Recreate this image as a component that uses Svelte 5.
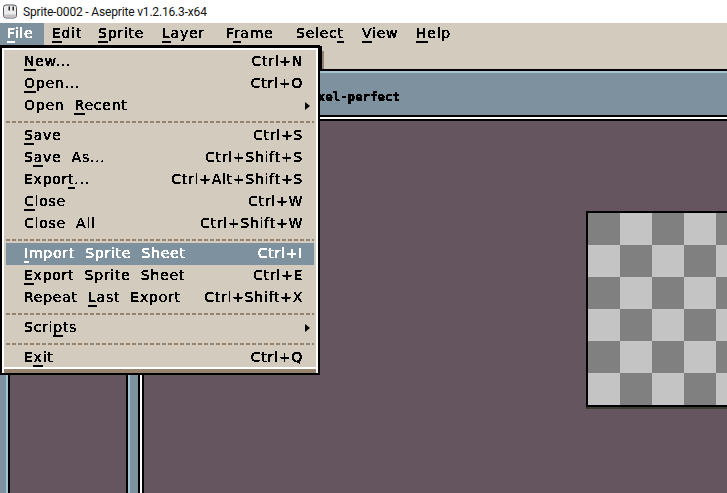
<script>
  const rows = [
    { a: '', u: 'N', b: 'ew...', k: 'Ctrl+N' },
    { a: '', u: 'O', b: 'pen...', k: 'Ctrl+O' },
    { a: 'Open ', u: 'R', b: 'ecent', sub: true },
    { sep: true },
    { a: '', u: 'S', b: 'ave', k: 'Ctrl+S' },
    { a: 'S', u: 'a', b: 've As...', k: 'Ctrl+Shift+S' },
    { a: 'Expor', u: 't', b: '...', k: 'Ctrl+Alt+Shift+S' },
    { a: '', u: 'C', b: 'lose', k: 'Ctrl+W' },
    { a: 'Close All', u: '', b: '', k: 'Ctrl+Shift+W' },
    { sep: true },
    { a: '', u: 'I', b: 'mport Sprite Sheet', k: 'Ctrl+I', on: true },
    { a: '', u: 'E', b: 'xport Sprite Sheet', k: 'Ctrl+E' },
    { a: 'Repeat ', u: 'L', b: 'ast Export', k: 'Ctrl+Shift+X' },
    { sep: true },
    { a: 'Scri', u: 'p', b: 'ts', sub: true },
    { sep: true },
    { a: 'E', u: 'x', b: 'it', k: 'Ctrl+Q' }
  ];
  const cells = Array.from({ length: 36 }, (_, i) => (Math.floor(i / 6) + i % 6) % 2 === 0);
</script>

<svg class="defs" width="0" height="0" aria-hidden="true">
  <filter id="crisp" color-interpolation-filters="sRGB" x="-2%" y="-10%" width="104%" height="120%">
    <feComponentTransfer>
      <feFuncA type="discrete" tableValues="0 1 1 1 1" />
    </feComponentTransfer>
  </filter>
</svg>

<div class="app">
  <header class="title">
    <svg class="logo" width="16" height="16" viewBox="0 0 16 16">
      <rect x="1.5" y="1" width="13" height="13" rx="2.5" fill="#ececec" stroke="#55555f" />
      <rect x="2" y="10.5" width="12" height="3" rx="1" fill="#c4c4c8" />
      <rect x="6.5" y="2.5" width="1.5" height="4" fill="#222" />
      <rect x="10.5" y="2.5" width="1.5" height="4" fill="#222" />
    </svg>
    <span>Sprite-0002 - Aseprite v1.2.16.3-x64</span>
  </header>

  <nav class="bar">
    <div class="item w-file on"><span class="px"><u>F</u>ile</span></div>
    <div class="item w-edit"><span class="px"><u>E</u>dit</span></div>
    <div class="item w-sprite"><span class="px"><u>S</u>prite</span></div>
    <div class="item w-layer"><span class="px"><u>L</u>ayer</span></div>
    <div class="item w-frame"><span class="px">F<u>r</u>ame</span></div>
    <div class="item w-select"><span class="px">Selec<u>t</u></span></div>
    <div class="item w-view"><span class="px"><u>V</u>iew</span></div>
    <div class="item w-help"><span class="px"><u>H</u>elp</span></div>
  </nav>

  <div class="tabs"><div class="tab"></div><div class="tab-edge"></div></div>

  <div class="context"><span class="ctx-text">Pixel-perfect</span></div>

  <main class="work">
    <div class="strip-left"></div>
    <div class="pane"></div>
    <div class="strip-mid"></div>
    <div class="editor">
      <div class="sprite">
        {#each cells as dark}
          <div class={dark ? 'dark' : 'light'}></div>
        {/each}
      </div>
    </div>
  </main>

  <div class="menu">
    <div class="menu-in">
      {#each rows as r}
        {#if r.sep}
          <div class="sep"></div>
        {:else}
          <div class="row" class:hot={r.on}>
            <span class="px label">{r.a}{#if r.u}<u>{r.u}</u>{/if}{r.b}</span>
            {#if r.k}<span class="px key">{r.k}</span>{/if}
            {#if r.sub}<span class="arrow"></span>{/if}
          </div>
        {/if}
      {/each}
    </div>
  </div>
</div>

<style>
  :global(body) { margin: 0; background: #fff; }
  .defs { position: absolute; }
  .app {
    position: relative; width: 727px; height: 493px; overflow: hidden;
    display: flex; flex-direction: column; background: #65555f;
  }
  .title {
    height: 23px; flex: none; background: #fff; display: flex; align-items: center; gap: 5px; padding-left: 2px;
    font: 12px Roboto, "Noto Sans", sans-serif; letter-spacing: -0.17px; color: #111;
  }
  .logo { flex: none; }
  .px {
    font-family: "DejaVu Sans", sans-serif; font-size: 14px; line-height: 20px;
    letter-spacing: 0.75px; word-spacing: 5px; filter: url(#crisp); white-space: pre; color: #000;
  }
  u { text-decoration-thickness: 2px; text-underline-offset: 3px; text-decoration-skip-ink: none; }
  .bar { height: 22px; flex: none; background: #d3cbbe; display: flex; }
  .item { padding-left: 8px; box-sizing: border-box; }
  .item.on { background: #7d929e; }
  .item.on .px { color: #fff; }
  .w-file { width: 44px; padding-left: 7px; }
  .w-edit { width: 46px; padding-left: 8px; }
  .w-sprite { width: 64px; }
  .w-layer { width: 64px; }
  .w-frame { width: 70px; }
  .w-select { width: 66px; }
  .w-view { width: 54px; }
  .w-help { width: 60px; }
  .tabs { height: 24px; flex: none; background: #d3cbbe; display: flex; padding-left: 320px; }
  .tab { width: 2px; margin-top: 1px; background: #000; }
  .tab-edge { width: 2px; margin-top: 6px; background: #97846f; }
  .context {
    height: 46px; box-sizing: border-box; flex: none; background: #7d929e; display: flex; align-items: center;
    padding: 8px 0 0 303px;
    border-top: 2px solid #000; box-shadow: inset 0 2px 0 #a3c3d3; position: relative;
    margin-bottom: 6px;
  }
  .context::after {
    content: ""; position: absolute; left: 0; right: 0; top: 100%; height: 2px; background: #000;
    box-shadow: 0 2px 0 #fff, 0 4px 0 #000;
  }
  .ctx-text {
    font: bold 12px "DejaVu Sans Mono", monospace; letter-spacing: 0.25px; color: #000; filter: url(#crisp);
  }
  .work { flex: 1; display: flex; min-height: 0; }
  .strip-left { width: 6px; flex: none; background: #7d929e; border-right: 2px solid #a3c3d3; box-shadow: 2px 0 0 #000; margin-right: 2px; }
  .pane { width: 116px; flex: none; }
  .strip-mid {
    width: 8px; flex: none; background: #7d929e; margin: 0 6px 0 4px; position: relative;
    box-shadow: -2px 0 0 #a3c3d3, -4px 0 0 #000, 2px 0 0 #000, 4px 0 0 #fff, 6px 0 0 #000;
  }
  .editor { flex: 1; padding: 90px 0 0 442px; min-width: 0; overflow: hidden; }
  .sprite {
    width: 192px; height: 192px; display: grid; grid-template-columns: repeat(6, 32px); grid-auto-rows: 32px;
    border: 2px solid #000; box-shadow: 0 2px 0 #3d3a2e; box-sizing: content-box;
  }
  .dark { background: #808080; } .light { background: #c4c4c4; }
  .menu {
    position: absolute; left: 0; top: 45px; width: 320px; height: 330px; box-sizing: border-box; background: #000;
    padding: 3px 2px 2px;
  }
  .menu-in {
    height: 100%; box-sizing: border-box; background: #d3cbbe;
    border: 2px solid #fff; border-bottom: 0; padding: 1px 2px 0;
    box-shadow: inset 0 -4px 0 #97846f, inset 0 -6px 0 #fff;
  }
  .row {
    height: 22px; display: flex; justify-content: space-between; padding: 0 11px 0 18px; position: relative;
  }
  .row.hot { background: #7d929e; }
  .row.hot .px { color: #fff; }
  .sep {
    height: 2px; margin: 4px 0 2px;
    background: repeating-linear-gradient(90deg, #97846f 0 4px, transparent 4px 6px);
  }
  .arrow {
    position: absolute; left: 299px; top: 7px; width: 0; height: 0;
    border-left: 5px solid #000; border-top: 4px solid transparent; border-bottom: 4px solid transparent;
  }
</style>
